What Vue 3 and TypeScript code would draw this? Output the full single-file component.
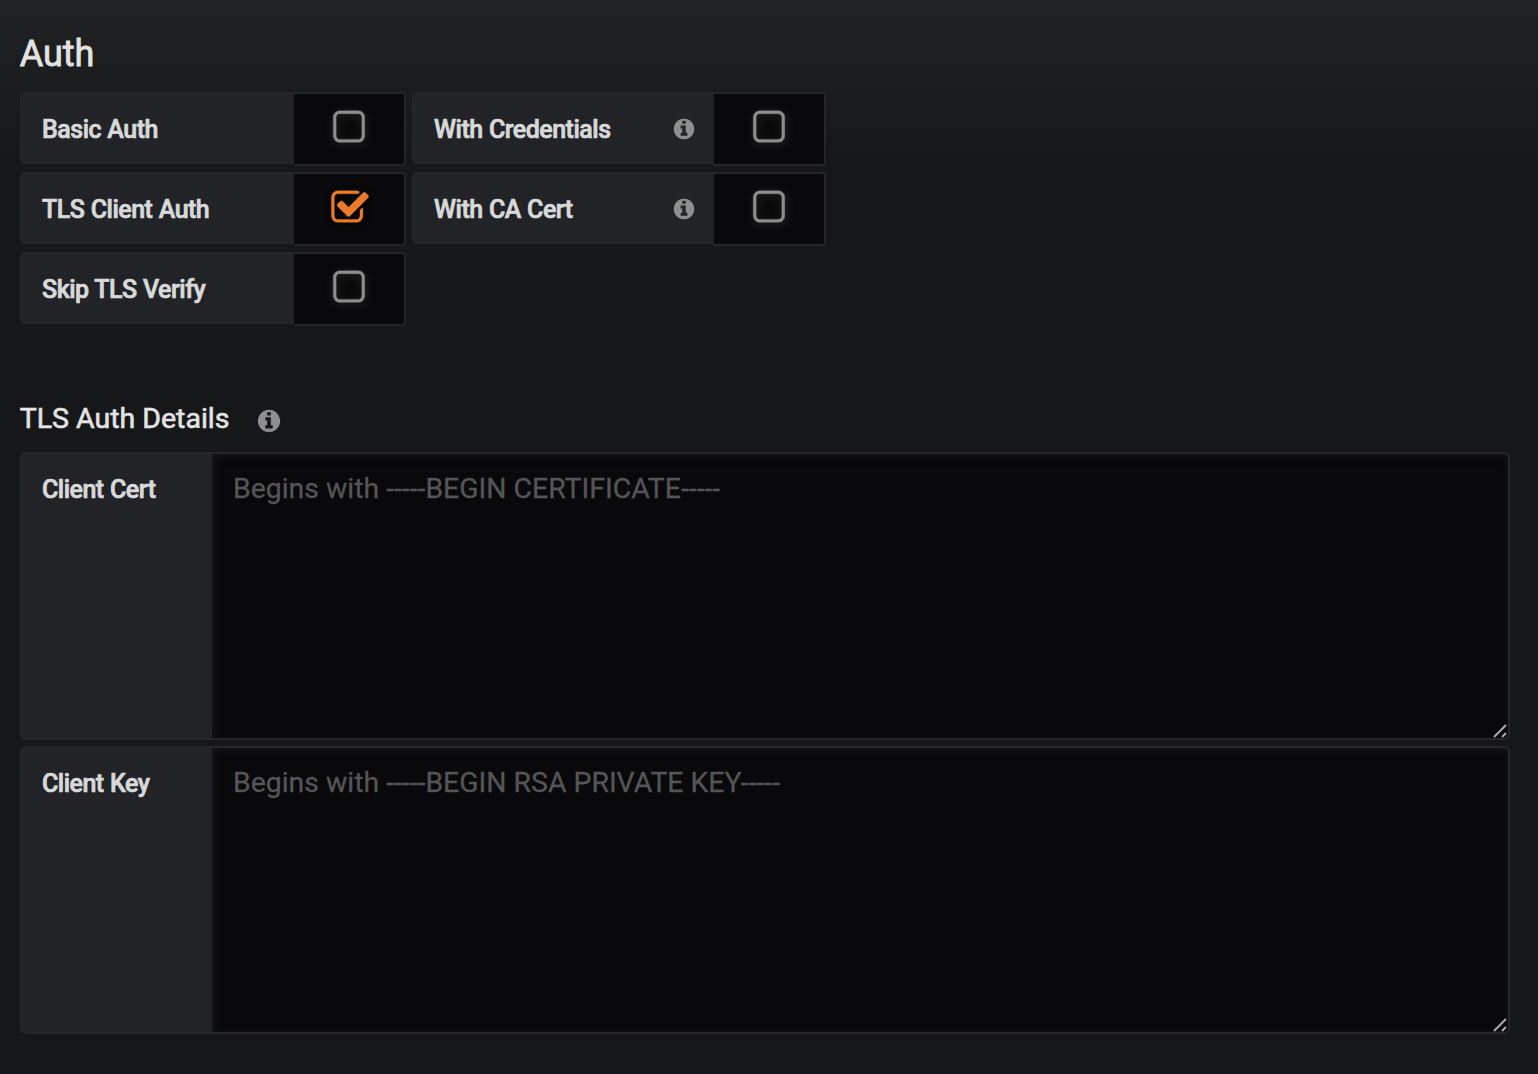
<script setup lang="ts">
import { ref } from 'vue'

interface Toggle {
  label: string
  checked: boolean
  hint: boolean
}

const rows = ref<Toggle[][]>([
  [
    { label: 'Basic Auth', checked: false, hint: false },
    { label: 'With Credentials', checked: false, hint: true },
  ],
  [
    { label: 'TLS Client Auth', checked: true, hint: false },
    { label: 'With CA Cert', checked: false, hint: true },
  ],
  [{ label: 'Skip TLS Verify', checked: false, hint: false }],
])

const fields = [
  { label: 'Client Cert', placeholder: 'Begins with -----BEGIN CERTIFICATE-----' },
  { label: 'Client Key', placeholder: 'Begins with -----BEGIN RSA PRIVATE KEY-----' },
]

const infoPath =
  'M1152 1376v-160q0-14-9-23t-23-9h-96v-512q0-14-9-23t-23-9h-320q-14 0-23 9t-9 23v160q0 14 9 23t23 9h96v320h-96q-14 0-23 9t-9 23v160q0 14 9 23t23 9h448q14 0 23-9t9-23zm-128-896v-160q0-14-9-23t-23-9h-192q-14 0-23 9t-9 23v160q0 14 9 23t23 9h192q14 0 23-9t9-23zm640 416q0 209-103 385.5t-279.5 279.5-385.5 103-385.5-103-279.5-279.5-103-385.5 103-385.5 279.5-279.5 385.5-103 385.5 103 279.5 279.5 103 385.5z'
const squarePath =
  'M1312 256h-832q-66 0-113 47t-47 113v832q0 66 47 113t113 47h832q66 0 113-47t47-113v-832q0-66-47-113t-113-47zm288 160v832q0 119-84.5 203.5t-203.5 84.5h-832q-119 0-203.5-84.5t-84.5-203.5v-832q0-119 84.5-203.5t203.5-84.5h832q119 0 203.5 84.5t84.5 203.5z'
const checkPath =
  'M1472 930v318q0 119-84.5 203.5t-203.5 84.5h-832q-119 0-203.5-84.5t-84.5-203.5v-832q0-119 84.5-203.5t203.5-84.5h832q63 0 117 25 15 7 18 23 3 17-9 29l-49 49q-10 10-23 10-3 0-9-2-23-6-45-6h-832q-66 0-113 47t-47 113v832q0 66 47 113t113 47h832q66 0 113-47t47-113v-254q0-13 9-22l64-64q10-10 23-10 6 0 12 3 20 8 20 29zm231-489l-814 814q-24 24-57 24t-57-24l-430-430q-24-24-24-57t24-57l110-110q24-24 57-24t57 24l263 263 647-647q24-24 57-24t57 24l110 110q24 24 24 57t-24 57z'
</script>

<template>
  <main class="page">
    <h3 class="heading">Auth</h3>
    <div class="rows">
      <div v-for="(row, i) in rows" :key="i" class="row">
        <div v-for="(item, j) in row" :key="item.label" class="toggle">
          <div class="label" :class="{ wide: j === 1 }">
            <span>{{ item.label }}</span>
            <svg v-if="item.hint" class="info" viewBox="0 0 1792 1792"><path :d="infoPath" /></svg>
          </div>
          <div class="switch" @click="item.checked = !item.checked">
            <svg class="box" :class="{ on: item.checked }" viewBox="0 0 1792 1792">
              <path :d="item.checked ? checkPath : squarePath" />
            </svg>
          </div>
        </div>
      </div>
    </div>

    <div class="subheading">
      <h6>TLS Auth Details</h6>
      <svg class="info large" viewBox="0 0 1792 1792"><path :d="infoPath" /></svg>
    </div>
    <div class="fields">
      <div v-for="f in fields" :key="f.label" class="field">
        <label class="label tall">{{ f.label }}</label>
        <div class="area">
          <textarea :placeholder="f.placeholder" spellcheck="false"></textarea>
          <svg class="grip" viewBox="0 0 14 14"><path d="M1 13L13 1M9 13L13 9" /></svg>
        </div>
      </div>
    </div>
  </main>
</template>

<style>
body {
  background: #161719;
}
</style>

<style scoped>
.page {
  box-sizing: border-box;
  height: 1074px;
  padding: 32px 28px 0 20px;
  background: linear-gradient(180deg, #212224 0, #161719 160px);
  color: #d8d9da;
  font-family: Roboto, "Liberation Sans", sans-serif;
}
.heading {
  margin: 0 0 16px;
  font-size: 36px;
  line-height: 44px;
  font-weight: 400;
  color: #e3e3e3;
  text-indent: -0.3px;
  -webkit-text-stroke: 0.8px #e3e3e3;
}
.rows {
  display: flex;
  flex-direction: column;
  gap: 6px;
}
.row {
  display: flex;
  gap: 6px;
}
.toggle {
  display: flex;
  align-items: flex-start;
}
.label {
  box-sizing: border-box;
  display: flex;
  align-items: center;
  justify-content: space-between;
  width: 274px;
  height: 72px;
  padding: 3px 18px 0 20px;
  border: 2px solid #262628;
  border-right: 0;
  border-radius: 6px 0 0 6px;
  background: #222327;
  font-size: 25px;
  line-height: 36px;
  font-weight: 500;
  letter-spacing: -0.5px;
  word-spacing: 0.6px;
  -webkit-text-stroke: 0.7px #d8d9da;
}
.label.wide {
  width: 302px;
}
.info {
  width: 24px;
  height: 24px;
  margin-top: -2px;
  fill: #8e8e8e;
}
.switch {
  box-sizing: border-box;
  display: flex;
  justify-content: center;
  width: 112px;
  height: 74px;
  padding: 14px 0 0 0;
  border: 2px solid #262628;
  border-left: 0;
  border-radius: 0 4px 4px 0;
  background: #09090b;
}
.box {
  width: 40px;
  height: 40px;
  fill: #8e8e8e;
  stroke: #8e8e8e;
  stroke-width: 18;
  filter: drop-shadow(1px 2px 4px rgba(142, 142, 130, 0.28));
}
.box.on {
  margin-left: 1px;
  fill: #eb7b28;
  stroke: #eb7b28;
  filter: drop-shadow(2px 2px 3px #000);
}
.subheading {
  display: flex;
  align-items: center;
  gap: 26px;
  margin: 72px 0 14px;
  height: 40px;
}
.subheading h6 {
  margin: 0;
  padding-top: 1px;
  font-size: 28.5px;
  line-height: 40px;
  font-weight: 400;
  color: #e3e3e3;
  text-indent: -0.3px;
  -webkit-text-stroke: 0.6px #e3e3e3;
}
.info.large {
  width: 26px;
  height: 26px;
  margin-top: 5px;
}
.fields {
  display: flex;
  flex-direction: column;
  gap: 6px;
}
.field {
  display: flex;
  height: 288px;
}
.label.tall {
  align-items: flex-start;
  width: 192px;
  height: 288px;
  padding-top: 18px;
  border-right: 1px solid #262628;
}
.area {
  position: relative;
  flex: 1;
  display: flex;
}
textarea {
  box-sizing: border-box;
  flex: 1;
  margin: 0;
  padding: 15px 20px 14px 21px;
  border: 2px solid #262628;
  border-left: 0;
  border-radius: 0 6px 6px 0;
  background: #09090b;
  box-shadow: inset 2px 2px 8px #17171a;
  color: #d8d9da;
  font: 400 28.4px/40px Roboto, "Liberation Sans", sans-serif;
  resize: none;
  outline: 0;
}
textarea::placeholder {
  color: #555;
  opacity: 1;
  -webkit-text-stroke: 0.3px #555;
}
.grip {
  position: absolute;
  right: 3px;
  bottom: 2.5px;
  width: 14px;
  height: 14px;
  fill: none;
  stroke: #aaa;
  stroke-width: 2;
}
</style>
